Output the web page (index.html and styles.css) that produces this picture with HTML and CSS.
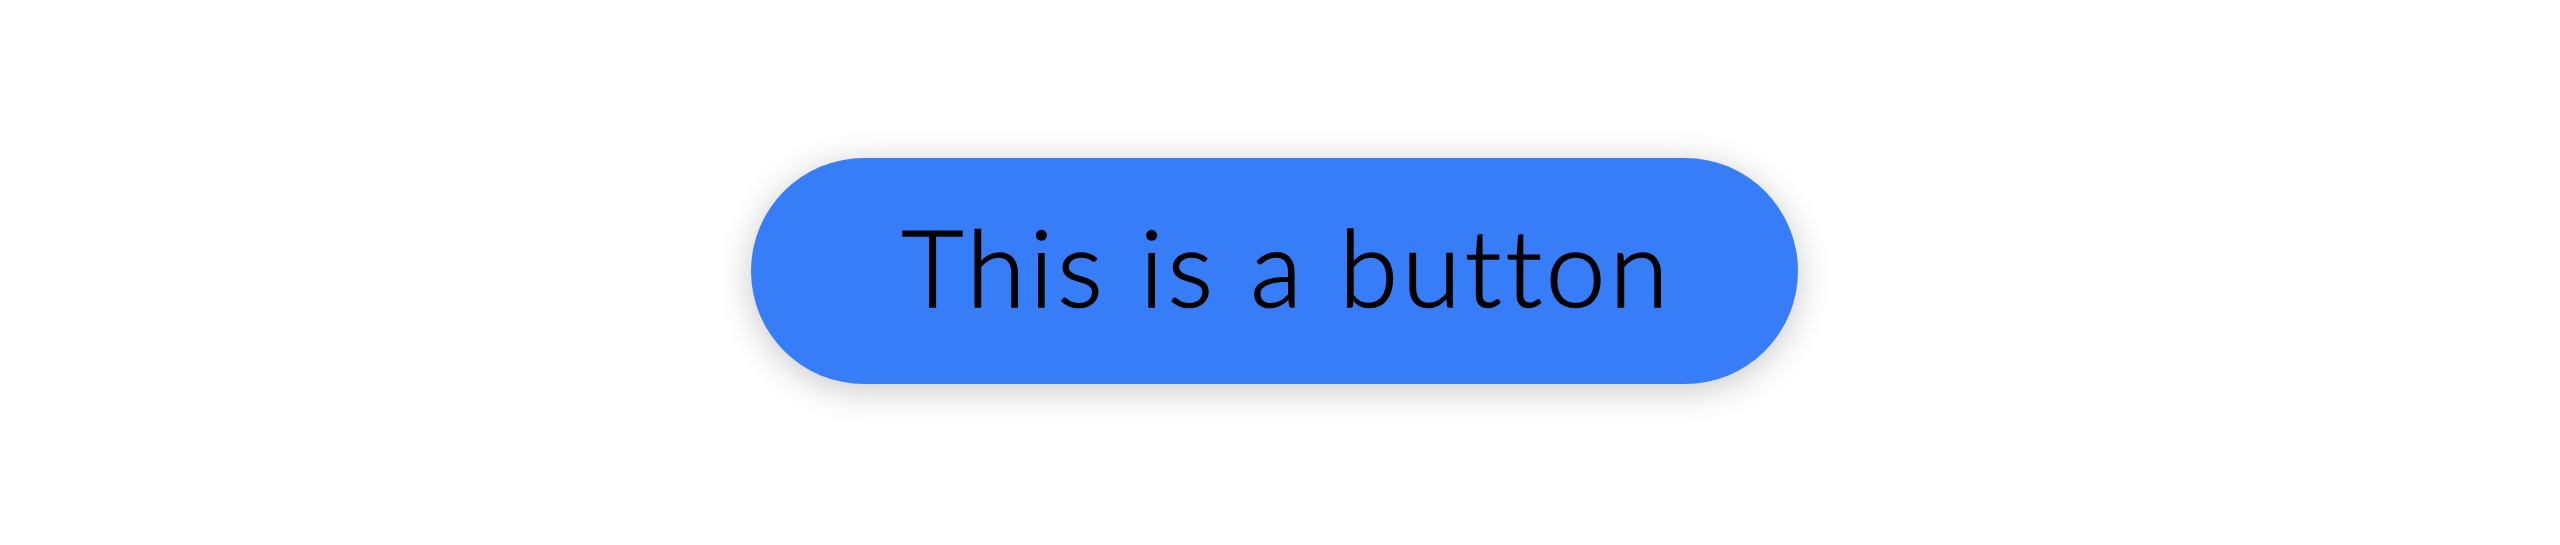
FILE: index.html
```html
<!DOCTYPE html>
<html lang="en">
<head>
    <meta charset="UTF-8">
    <meta name="viewport" content="width=device-width, initial-scale=1.0">
    <title>Button</title>
    <link rel="stylesheet" href="styles.css">
</head>
<body>
    <main class="stage">
        <button type="button" class="pill-button">This is a button</button>
    </main>
</body>
</html>
```

FILE: styles.css
```css
html, body {
    height: 100%;
}

body {
    margin: 0;
    background-color: #ffffff;
    font-family: Lato, 'Noto Sans', sans-serif;
}

.stage {
    height: 100%;
    display: flex;
    align-items: center;
    justify-content: center;
    padding-right: 11px;
    padding-bottom: 3px;
    box-sizing: border-box;
}

.pill-button {
    width: 1047px;
    height: 226px;
    border: none;
    border-radius: 113px;
    background-color: #377df7;
    color: #000;
    font-family: Lato, 'Noto Sans', sans-serif;
    font-weight: 300;
    font-size: 107px;
    letter-spacing: 4px;
    -webkit-text-stroke: 1.6px #000;
    box-shadow: 0 6px 34px rgba(0, 0, 0, 0.22);
    cursor: pointer;
    padding: 0 0 12px 25px;
}
```
